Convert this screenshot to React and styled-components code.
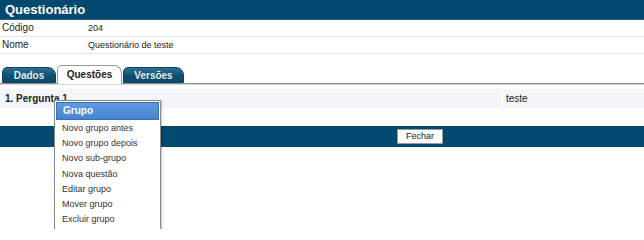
import React from "react";
import styled, { createGlobalStyle } from "styled-components";

const Global = createGlobalStyle`
  html, body { margin: 0; padding: 0; background: #fff; }
  body { font-family: "Liberation Sans", Arial, sans-serif; }
`;

const Page = styled.div`
  position: relative;
  width: 644px;
  height: 229px;
  overflow: hidden;
`;

const Header = styled.div`
  height: 19px;
  background: #03496f;
  border-bottom: 1px solid #2b5f7e;
  color: #fff;
  font-weight: bold;
  font-size: 13px;
  line-height: 19px;
  padding-left: 5px;
`;

const InfoRow = styled.div`
  display: grid;
  grid-template-columns: 88px 1fr;
  height: 16px;
  line-height: 16px;
  border-bottom: 1px solid #e6e6e6;
  color: #222;
`;

const Label = styled.div`
  padding-left: 2px;
  font-size: 10px;
`;

const Value = styled.div`
  font-size: 9px;
`;

const TabBar = styled.div`
  display: flex;
  align-items: flex-end;
  gap: 1px;
  margin-top: 11px;
  padding-left: 2px;
  height: 18px;
  border-bottom: 1px solid #8c8c8c;
  box-shadow: 0 1px 0 #d6d6d6;
`;

const Tab = styled.div`
  box-sizing: border-box;
  width: ${(p) => p.$w}px;
  height: ${(p) => (p.$active ? 19 : 16)}px;
  margin-bottom: ${(p) => (p.$active ? -1 : 0)}px;
  text-align: center;
  font-size: 10px;
  font-weight: bold;
  line-height: ${(p) => (p.$active ? 18 : 16)}px;
  border-radius: 5px 8px 0 0;
  color: ${(p) => (p.$active ? "#222" : "#e3ecf1")};
  background: ${(p) =>
    p.$active ? "#fff" : "linear-gradient(#2f6f8e, #0c4e70 60%, #0a4a6b)"};
  border: 1px solid ${(p) => (p.$active ? "#9a9a9a" : "#0a4465")};
  border-bottom: ${(p) => (p.$active ? "none" : "1px solid #0a4465")};
`;

const ContentRow = styled.div`
  display: grid;
  grid-template-columns: 502px 1fr;
  gap: 1px;
  margin-top: 5px;
  height: 19px;
`;

const Cell = styled.div`
  background: #f3f5fa;
  padding-left: ${(p) => p.$pad}px;
  font-size: 10px;
  line-height: 19px;
  color: #222;
  font-weight: ${(p) => (p.$bold ? "bold" : "normal")};
`;

const Footer = styled.div`
  margin-top: 18px;
  height: 21px;
  background: #03496f;
  display: flex;
  justify-content: center;
  align-items: center;
  padding-left: 196px;
  box-sizing: border-box;
`;

const Button = styled.button`
  width: 46px;
  height: 15px;
  padding: 0;
  background: #fff;
  border: 1px solid #9a9a9a;
  font-family: "Liberation Sans", Arial, sans-serif;
  font-size: 9px;
  color: #222;
  line-height: 13px;
`;

const Menu = styled.div`
  position: absolute;
  left: 54px;
  top: 100px;
  width: 107px;
  box-sizing: border-box;
  background: #fff;
  border: 1px solid #8a8a8a;
  box-shadow: 1px 1px 2px rgba(0, 0, 0, 0.25);
  padding: 0 0 2px 0;
`;

const MenuHead = styled.div`
  height: 16px;
  line-height: 16px;
  margin: 1px 1px 1px 1px;
  padding-left: 6px;
  background: linear-gradient(#5e9ae0, #4684cf);
  border: 1px solid #3a6fb5;
  color: #fff;
  font-weight: bold;
  font-size: 10px;
`;

const MenuItem = styled.div`
  height: 15.2px;
  line-height: 15px;
  padding-left: 7px;
  font-size: 9px;
  color: #333;
  white-space: nowrap;
`;

const items = [
  "Novo grupo antes",
  "Novo grupo depois",
  "Novo sub-grupo",
  "Nova questão",
  "Editar grupo",
  "Mover grupo",
  "Excluir grupo",
];

export default function App() {
  return (
    <Page>
      <Global />
      <Header>Questionário</Header>
      <InfoRow>
        <Label>Código</Label>
        <Value>204</Value>
      </InfoRow>
      <InfoRow>
        <Label>Nome</Label>
        <Value>Questionário de teste</Value>
      </InfoRow>
      <TabBar>
        <Tab $w={54}>Dados</Tab>
        <Tab $w={65} $active>Questões</Tab>
        <Tab $w={61}>Versões</Tab>
      </TabBar>
      <ContentRow>
        <Cell $pad={5} $bold>1. Pergunta 1</Cell>
        <Cell $pad={3}>teste</Cell>
      </ContentRow>
      <Footer>
        <Button>Fechar</Button>
      </Footer>
      <Menu>
        <MenuHead>Grupo</MenuHead>
        {items.map((t) => (
          <MenuItem key={t}>{t}</MenuItem>
        ))}
      </Menu>
    </Page>
  );
}
